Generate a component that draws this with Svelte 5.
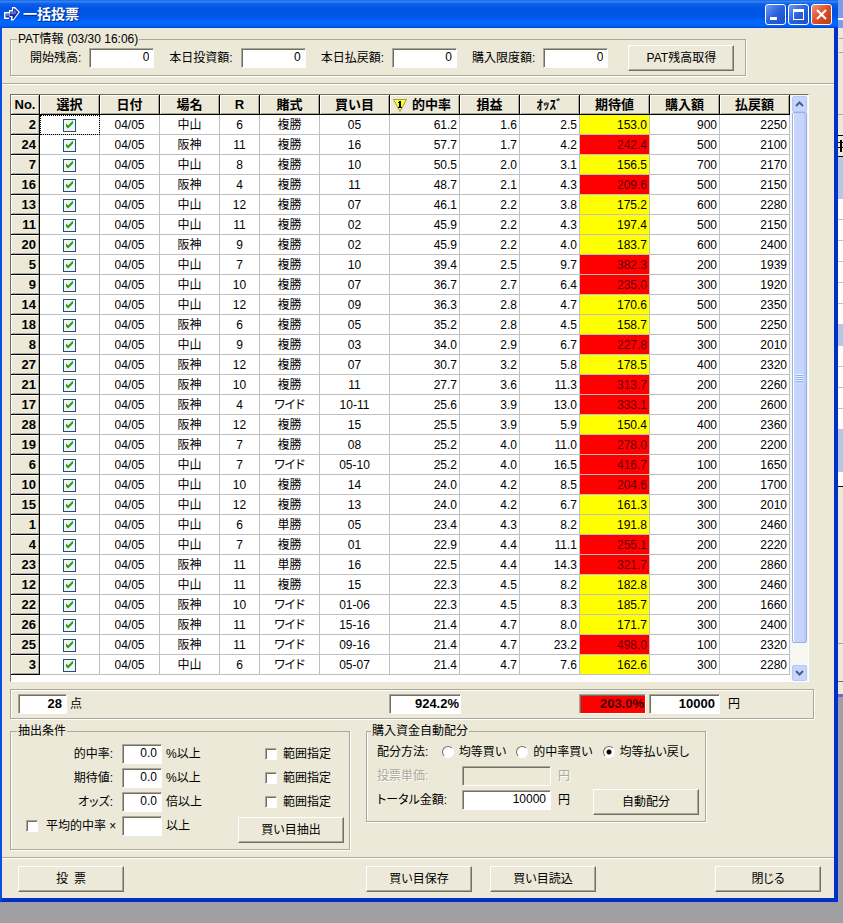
<!--
  App.svelte
  一括投票ウィンドウ
-->
<script>
	const columns = [
		{ label: 'No.', width: 29 },
		{ label: '選択', width: 60 },
		{ label: '日付', width: 60 },
		{ label: '場名', width: 60 },
		{ label: 'R', width: 40 },
		{ label: '賭式', width: 60 },
		{ label: '買い目', width: 70 },
		{ label: '的中率', width: 70, sorted: true },
		{ label: '損益', width: 60 },
		{ label: 'ｵｯｽﾞ', width: 60 },
		{ label: '期待値', width: 70 },
		{ label: '購入額', width: 70 },
		{ label: '払戻額', width: 70 }
	];

	// No, 場名, R, 賭式, 買い目, 的中率, 損益, オッズ, 期待値, 購入額, 払戻額
	const bets = [
		[2, '中山', 6, '複勝', '05', '61.2', '1.6', '2.5', '153.0', 900, 2250],
		[24, '阪神', 11, '複勝', '16', '57.7', '1.7', '4.2', '242.4', 500, 2100],
		[7, '中山', 8, '複勝', '10', '50.5', '2.0', '3.1', '156.5', 700, 2170],
		[16, '阪神', 4, '複勝', '11', '48.7', '2.1', '4.3', '209.6', 500, 2150],
		[13, '中山', 12, '複勝', '07', '46.1', '2.2', '3.8', '175.2', 600, 2280],
		[11, '中山', 11, '複勝', '02', '45.9', '2.2', '4.3', '197.4', 500, 2150],
		[20, '阪神', 9, '複勝', '02', '45.9', '2.2', '4.0', '183.7', 600, 2400],
		[5, '中山', 7, '複勝', '10', '39.4', '2.5', '9.7', '382.3', 200, 1939],
		[9, '中山', 10, '複勝', '07', '36.7', '2.7', '6.4', '235.0', 300, 1920],
		[14, '中山', 12, '複勝', '09', '36.3', '2.8', '4.7', '170.6', 500, 2350],
		[18, '阪神', 6, '複勝', '05', '35.2', '2.8', '4.5', '158.7', 500, 2250],
		[8, '中山', 9, '複勝', '03', '34.0', '2.9', '6.7', '227.8', 300, 2010],
		[27, '阪神', 12, '複勝', '07', '30.7', '3.2', '5.8', '178.5', 400, 2320],
		[21, '阪神', 10, '複勝', '11', '27.7', '3.6', '11.3', '313.7', 200, 2260],
		[17, '阪神', 4, 'ワイド', '10-11', '25.6', '3.9', '13.0', '333.1', 200, 2600],
		[28, '阪神', 12, '複勝', '15', '25.5', '3.9', '5.9', '150.4', 400, 2360],
		[19, '阪神', 7, '複勝', '08', '25.2', '4.0', '11.0', '278.0', 200, 2200],
		[6, '中山', 7, 'ワイド', '05-10', '25.2', '4.0', '16.5', '416.7', 100, 1650],
		[10, '中山', 10, '複勝', '14', '24.0', '4.2', '8.5', '204.6', 200, 1700],
		[15, '中山', 12, '複勝', '13', '24.0', '4.2', '6.7', '161.3', 300, 2010],
		[1, '中山', 6, '単勝', '05', '23.4', '4.3', '8.2', '191.8', 300, 2460],
		[4, '中山', 7, '複勝', '01', '22.9', '4.4', '11.1', '255.1', 200, 2220],
		[23, '阪神', 11, '単勝', '16', '22.5', '4.4', '14.3', '321.7', 200, 2860],
		[12, '中山', 11, '複勝', '15', '22.3', '4.5', '8.2', '182.8', 300, 2460],
		[22, '阪神', 10, 'ワイド', '01-06', '22.3', '4.5', '8.3', '185.7', 200, 1660],
		[26, '阪神', 11, 'ワイド', '15-16', '21.4', '4.7', '8.0', '171.7', 300, 2400],
		[25, '阪神', 11, 'ワイド', '09-16', '21.4', '4.7', '23.2', '498.0', 100, 2320],
		[3, '中山', 6, 'ワイド', '05-07', '21.4', '4.7', '7.6', '162.6', 300, 2280]
	];

	const balances = ['開始残高:', '本日投資額:', '本日払戻額:', '購入限度額:'];

	const filters = [
		{ id: 'hit', label: '的中率:', unit: '%以上' },
		{ id: 'expect', label: '期待値:', unit: '%以上' },
		{ id: 'odds', label: 'オッズ:', unit: '倍以上' }
	];

	const methods = ['均等買い', '的中率買い', '均等払い戻し'];
	let method = $state('均等払い戻し');
</script>

<div class="desktop">
	<main class="window">
		<header class="titlebar">
			<svg class="app-icon" width="18" height="16" viewBox="0 0 18 16" aria-hidden="true">
				<path d="M1 6h5V4h3V1h3l5 5-6.500 8.500H8V11H6v2H1z" fill="#fff" />
				<path d="M2.500 7.500h4v4h-4zM7 5.500h3v-3h1.500l4 3.500-5 7H9.500V10H7z" fill="#2030a0" />
				<path d="M3 8h3v2H3zM7.500 6H11V3.500L13.500 6 12 8H7.500z" fill="#5878e0" />
			</svg>
			<h1>一括投票</h1>
			<button class="caption" aria-label="最小化">
				<svg width="19" height="19" viewBox="0 0 19 19"><path d="M4 12h7v3H4z" fill="#fff" /></svg>
			</button>
			<button class="caption" aria-label="最大化">
				<svg width="19" height="19" viewBox="0 0 19 19"><path d="M4 4h11v11H4zM5 7v7h9V7z" fill="#fff" fill-rule="evenodd" /></svg>
			</button>
			<button class="caption close" aria-label="閉じる">
				<svg width="19" height="19" viewBox="0 0 19 19"><path d="M5 5l9 9M14 5l-9 9" stroke="#fff" stroke-width="2.200" /></svg>
			</button>
		</header>

		<fieldset class="pat">
			<legend>PAT情報 (03/30 16:06)</legend>
			<div class="pat-row">
				{#each balances as label, i}
					<label for="balance-{i}">{label}</label>
					<input id="balance-{i}" class="box balance" type="text" value="0" />
				{/each}
				<button class="btn">PAT残高取得</button>
			</div>
		</fieldset>

		<hr />

		<section class="grid">
			<table>
				<colgroup>
					{#each columns as column}
						<col style="width: {column.width}px" />
					{/each}
				</colgroup>
				<thead>
					<tr>
						{#each columns as column}
							<th scope="col">
								{#if column.sorted}
									<span class="sorted">
										<svg width="14" height="13" viewBox="0 0 14 13" aria-hidden="true">
											<path d="M0.500 0.500h13L7 12.500z" fill="#ffff28" stroke="#a09c50" />
											<path d="M5 3h1V2h2v6h1v1H5V8h1V4H5z" fill="#000" />
										</svg>
										{column.label}
									</span>
								{:else}
									{column.label}
								{/if}
							</th>
						{/each}
					</tr>
				</thead>
				<tbody>
					{#each bets as [no, place, race, type, pick, hit, profit, odds, expect, stake, payout], i}
						<tr>
							<th scope="row">{no}</th>
							<td class:focused={i === 0}>
								<input class="tick" type="checkbox" checked aria-label="{no} 選択" />
							</td>
							<td>04/05</td>
							<td>{place}</td>
							<td>{race}</td>
							<td>{type}</td>
							<td>{pick}</td>
							<td class="num">{hit}</td>
							<td class="num">{profit}</td>
							<td class="num">{odds}</td>
							<td class="num expect" class:high={Number(expect) >= 200}>{expect}</td>
							<td class="num">{stake}</td>
							<td class="num">{payout}</td>
						</tr>
					{/each}
				</tbody>
			</table>
			<div class="scrollbar">
				<button class="arrow" aria-label="上へ">
					<svg width="9" height="6" viewBox="0 0 9 6"><path d="M1 5l3.500-3.500L8 5" fill="none" stroke="#4d6185" stroke-width="2" /></svg>
				</button>
				<div class="thumb"><span class="grip"></span></div>
				<button class="arrow" aria-label="下へ">
					<svg width="9" height="6" viewBox="0 0 9 6"><path d="M1 1l3.500 3.500L8 1" fill="none" stroke="#4d6185" stroke-width="2" /></svg>
				</button>
			</div>
		</section>

		<section class="summary">
			<input id="count" class="box count" type="text" value="28" />
			<label for="count">点</label>
			<input class="box hit-total" type="text" value="924.2%" aria-label="的中率合計" />
			<input class="box expect-total" type="text" value="203.0%" aria-label="期待値合計" />
			<input id="stake-total" class="box stake-total" type="text" value="10000" />
			<label for="stake-total">円</label>
		</section>

		<div class="panels">
			<fieldset class="filter">
				<legend>抽出条件</legend>
				<div class="filter-grid">
					{#each filters as f}
						<label class="name" for={f.id}>{f.label}</label>
						<input id={f.id} class="box" type="text" value="0.0" />
						<span class="unit">{f.unit}</span>
						<label class="range"><input class="check" type="checkbox" />範囲指定</label>
					{/each}
					<label class="average"><input class="check" type="checkbox" />平均的中率 ×</label>
					<input class="box" type="text" aria-label="平均的中率の倍率" />
					<span class="unit">以上</span>
					<button class="btn extract">買い目抽出</button>
				</div>
			</fieldset>

			<fieldset class="split">
				<legend>購入資金自動配分</legend>
				<div class="split-body">
					<div class="line">
						<span class="method">配分方法:</span>
						{#each methods as m}
							<label class="radio"><input type="radio" name="method" value={m} bind:group={method} />{m}</label>
						{/each}
					</div>
					<div class="line disabled">
						<label class="name" for="unit-price">投票単価:</label>
						<input id="unit-price" class="box amount" type="text" disabled />
						<span class="unit">円</span>
					</div>
					<div class="line">
						<label class="name" for="total">トータル金額:</label>
						<input id="total" class="box amount" type="text" value="10000" />
						<span class="unit">円</span>
						<button class="btn allot">自動配分</button>
					</div>
				</div>
			</fieldset>
		</div>

		<hr />

		<footer>
			<button class="btn">投&ensp;票</button>
			<button class="btn save">買い目保存</button>
			<button class="btn load">買い目読込</button>
			<button class="btn exit">閉じる</button>
		</footer>
	</main>

	<!-- 後ろのウィンドウの右端 -->
	<aside class="behind" aria-hidden="true">
		<div class="b-title"></div>
		<div class="b-panel"></div>
		<div class="b-head"></div>
		<div class="b-blue tall"></div>
		<div class="b-rows first"></div>
		<div class="b-blue"></div>
		<div class="b-rows second"></div>
		<div class="b-blue tall"></div>
		<div class="b-rows last"></div>
		<div class="b-foot"></div>
	</aside>
</div>

<style>
	:global(body) {
		background: #a09fa3;
	}

	.desktop {
		display: flex;
		align-items: flex-start;
		font-family: 'Liberation Sans', 'Noto Sans CJK JP', sans-serif;
		font-size: 12px;
		line-height: 12px;
		font-feature-settings: 'palt';
		color: #000;
	}

	.desktop * {
		box-sizing: border-box;
	}

	.window {
		flex: 1;
		min-width: 0;
		background: #ece9d8;
		border: solid #0a50e0;
		border-width: 0 4px 4px 2px;
		border-right-color: #0030c8;
		border-bottom-color: #0030c8;
	}

	button,
	input {
		font: inherit;
		font-feature-settings: inherit;
		color: inherit;
		margin: 0;
		padding: 0;
	}

	/* タイトルバー */
	.titlebar {
		display: flex;
		align-items: center;
		gap: 2px;
		height: 28px;
		margin: 0 -4px 0 -2px;
		padding: 0 6px 0 3px;
		background: linear-gradient(#0a4fd0 0, #3a8cf8 1px, #0a5eea 4px, #0054e2 9px, #0055e6 16px, #0066fc 22px, #0064f8 26px, #0040c8 28px);
	}

	h1 {
		flex: 1;
		margin: 0;
		font-size: 14px;
		line-height: 20px;
		font-weight: bold;
		color: #fff;
		text-shadow: 1px 1px #0a2c88;
	}

	.caption {
		display: flex;
		width: 21px;
		height: 21px;
		border: 1px solid #fff;
		border-radius: 3px;
		background: linear-gradient(135deg, #6f9cf4, #2a60dc 50%, #1c4fc8);
	}

	.caption.close {
		background: linear-gradient(135deg, #f0937a, #dc4c28 50%, #c03c14);
	}

	/* 枠 */
	fieldset {
		min-width: 0;
		margin: 0;
		padding: 0;
		border: 1px solid #aca899;
		box-shadow: inset 1px 0 #fff, 1px 1px #fff;
	}

	legend {
		margin-left: 6px;
		padding: 0 1px;
		background: #ece9d8;
	}

	hr {
		height: 2px;
		margin: 0;
		border: solid #aca899;
		border-width: 1px 0 0;
		background: #fff;
	}

	.box {
		height: 20px;
		padding: 0 4px 2px 2px;
		border: 1px solid;
		border-color: #aca899 #fff #fff #aca899;
		border-radius: 0;
		box-shadow: inset 1px 1px #716f64;
		background: #fff;
		text-align: right;
	}

	.btn {
		width: 106px;
		height: 26px;
		border: 1px solid;
		border-color: #fff #716f64 #716f64 #fff;
		box-shadow: inset -1px -1px #aca899;
		background: #ece9d8;
	}

	.pat {
		width: fit-content;
		margin: 5px 0 7px 8px;
	}

	.pat-row {
		display: flex;
		align-items: center;
		gap: 8px;
		padding: 0 11px 4px 19px;
	}

	.balance {
		width: 65px;
		margin-right: 7px;
	}

	.pat .btn {
		margin-left: 5px;
	}

	/* 一覧 */
	.grid {
		display: flex;
		margin: 9px 25px 7px 8px;
		padding-bottom: 6px;
		border: 1px solid;
		border-color: #716f64 #fff #fff #716f64;
		background: #fff;
	}

	table {
		flex: 1;
		min-width: 0;
		table-layout: fixed;
		border-collapse: separate;
		border-spacing: 0;
		width: 100%;
	}

	th,
	td {
		height: 20px;
		padding: 1px 0 0;
		border: solid #c0c0c0;
		border-width: 0 1px 1px 0;
		text-align: center;
		white-space: nowrap;
		overflow: hidden;
	}

	th {
		background: #ece9d8;
		border-color: #000;
		box-shadow: inset 1px 1px #fff, inset -1px -1px #aca899;
		font-size: 13px;
	}

	tbody th {
		padding-right: 3px;
		text-align: right;
	}

	.sorted {
		display: flex;
		align-items: center;
		justify-content: space-between;
		padding: 0 8px 0 3px;
	}

	.num {
		padding-right: 2px;
		text-align: right;
	}

	.expect {
		background: #ff0;
	}

	.expect.high {
		background: #f00;
		color: #600000;
	}

	.focused {
		outline: 1px dotted #000;
		outline-offset: -1px;
	}

	.tick {
		display: block;
		appearance: none;
		width: 13px;
		height: 13px;
		margin: 0 auto;
		border: 1px solid #1c5180;
		background: #f3f3ef;
	}

	.tick:checked::before {
		content: '';
		display: block;
		height: 11px;
		background: #21a121;
		clip-path: polygon(2px 4px, 4px 6px, 9px 1px, 9px 4px, 4px 9px, 2px 7px);
	}

	.scrollbar {
		display: flex;
		flex-direction: column;
		width: 18px;
		padding: 1px 1px 0 2px;
		margin-bottom: -6px;
		background: #f7f7f2;
	}

	.arrow {
		display: flex;
		align-items: center;
		justify-content: center;
		height: 16px;
		border: 1px solid #b4c8f6;
		border-radius: 2px;
		background: #c5d5fd;
	}

	.thumb {
		display: flex;
		flex: 1;
		align-items: center;
		justify-content: center;
		margin-bottom: 22px;
		border: 1px solid #98b0e8;
		border-radius: 2px;
		background: linear-gradient(90deg, #fff 1px, #c9d7fd 1px, #c6d4fe 10px, #b4c8f8);
	}

	.grip {
		width: 7px;
		height: 8px;
		background: repeating-linear-gradient(#eef4fe 0 1px, #8cb0f8 1px 2px);
	}

	/* 合計 */
	.summary {
		display: flex;
		align-items: center;
		height: 30px;
		margin: 0 20px 0 8px;
		padding: 0 7px;
		border: 1px solid #aca899;
		box-shadow: inset 1px 1px #fff, 1px 1px #fff;
	}

	.summary .box {
		font-size: 13px;
		font-weight: bold;
	}

	.count {
		width: 49px;
		margin-right: 3px;
	}

	.hit-total {
		width: 72px;
		margin-left: 307px;
	}

	.summary .hit-total,
	.summary .expect-total {
		padding-right: 1px;
	}

	.expect-total {
		width: 67px;
		margin: 0 3px 0 118px;
	}

	.summary .expect-total {
		background: #f00;
		color: #400000;
	}

	.stake-total {
		width: 71px;
		margin-right: 8px;
	}

	/* 抽出条件と自動配分 */
	.panels {
		display: flex;
		align-items: flex-start;
		gap: 16px;
		margin: 6px 8px 7px;
	}

	.filter {
		width: 340px;
	}

	.filter-grid {
		display: grid;
		grid-template-columns: 111px 40px 76px 106px;
		align-items: start;
		padding: 5px 0 6px;
		line-height: 24px;
	}

	.filter-grid .box {
		margin-top: 2px;
	}

	.filter-grid .name {
		padding-right: 9px;
		text-align: right;
	}

	.unit {
		padding-left: 4px;
	}

	.range,
	.average {
		display: flex;
		align-items: center;
		gap: 6px;
		height: 24px;
		padding-left: 27px;
		white-space: nowrap;
	}

	.average {
		gap: 8px;
		padding-left: 15px;
	}

	.check {
		flex: none;
		appearance: none;
		width: 12px;
		height: 12px;
		border: 1px solid;
		border-color: #aca899 #fff #fff #aca899;
		box-shadow: inset 1px 1px #716f64;
		background: #fff;
	}

	.extract {
		margin-top: 3px;
	}

	.split {
		width: 340px;
	}

	.split legend {
		margin-left: 4px;
	}

	.split-body {
		padding: 3px 6px 9px 10px;
	}

	.line {
		display: flex;
		align-items: center;
		height: 24px;
		white-space: nowrap;
	}

	.method {
		width: 70px;
	}

	.line .name {
		width: 85px;
	}

	.line .unit {
		padding-left: 7px;
	}

	.amount {
		width: 89px;
	}

	.disabled {
		color: #aca899;
		text-shadow: 1px 1px #fff;
	}

	.disabled .box {
		background: #ece9d8;
	}

	.radio {
		display: flex;
		align-items: center;
		gap: 5px;
		margin-right: 10px;
	}

	.method + .radio {
		margin-left: 5px;
	}

	.radio input {
		appearance: none;
		width: 12px;
		height: 12px;
		border: 1px solid;
		border-color: #716f64 #fff #fff #716f64;
		border-radius: 50%;
		background: #fff;
	}

	.radio input:checked {
		background: radial-gradient(circle, #000 2px, #fff 3px);
	}

	.allot {
		margin: 4px 0 0 auto;
	}

	/* 下部ボタン */
	footer {
		display: flex;
		padding: 7px 13px 6px 16px;
	}

	.save {
		margin-left: 242px;
	}

	.load {
		margin-left: 18px;
	}

	.exit {
		margin-left: auto;
	}

	/* 後ろのウィンドウ */
	.behind {
		width: 5px;
		background: #ece9d8;
		border-bottom: 3px solid #6a6ad0;
	}

	.b-title {
		height: 28px;
		background: linear-gradient(#7a9ce8, #7c9cf0 18px, #fff 18px, #fff 20px, #7c9cf0 20px);
	}

	.b-panel {
		height: 107px;
		background: linear-gradient(#aca899, #aca899) 1px 10px / 4px 1px no-repeat, linear-gradient(#aca899, #aca899) 1px 24px / 4px 1px no-repeat,
			linear-gradient(#aca899, #aca899) 0 86px / 5px 1px no-repeat;
	}

	.b-head {
		height: 22px;
		border: solid #000;
		border-width: 1px 0;
		background: linear-gradient(#000, #000) 0 6px / 5px 1px no-repeat, linear-gradient(#000, #000) 0 11px / 5px 1px no-repeat,
			linear-gradient(#000, #000) 2px 4px / 2px 12px no-repeat;
	}

	.b-blue {
		height: 21px;
		background: #b4c8ec;
	}

	.b-blue.tall {
		height: 42px;
	}

	.b-rows {
		background: repeating-linear-gradient(#fff 0 20px, #c0c0c0 20px 21px);
	}

	.b-rows.first {
		height: 126px;
	}

	.b-rows.second {
		height: 84px;
	}

	.b-rows.last {
		height: 15px;
		border-bottom: 1px solid #000;
	}

	.b-foot {
		height: 207px;
		background: linear-gradient(#aca899, #aca899) 0 156px / 5px 1px no-repeat, linear-gradient(#716f64, #716f64) 0 194px / 5px 1px no-repeat;
	}
</style>
